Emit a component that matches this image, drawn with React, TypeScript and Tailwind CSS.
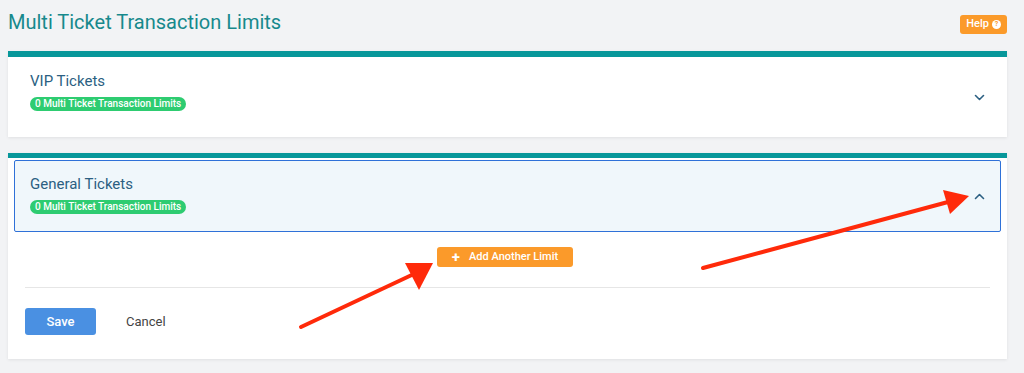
import React from 'react';

function Chevron({ up }: { up?: boolean }) {
  return (
    <svg width="11" height="7" viewBox="0 0 11 7" className="text-[#2b5f82]">
      <path
        d={up ? 'M1.5 5.5 L5.5 1.5 L9.5 5.5' : 'M1.5 1.5 L5.5 5.5 L9.5 1.5'}
        fill="none"
        stroke="currentColor"
        strokeWidth="1.6"
        strokeLinecap="round"
        strokeLinejoin="round"
      />
    </svg>
  );
}

function Badge() {
  return (
    <span className="inline-flex h-[14px] items-center rounded-full bg-[#2ecc71] px-[5px] text-[10px] font-medium leading-none text-white">
      0 Multi Ticket Transaction Limits
    </span>
  );
}

function Arrows() {
  return (
    <svg className="pointer-events-none absolute left-0 top-0" width="1024" height="373">
      <g fill="#ff2a0a" stroke="#ff2a0a">
        <line x1="301" y1="327" x2="416" y2="273" strokeWidth="4" strokeLinecap="round" />
        <polygon points="433,263 405,263 419,290" stroke="none" />
        <line x1="703" y1="268" x2="948" y2="202" strokeWidth="4" strokeLinecap="round" />
        <polygon points="969,196 943,190 950,214" stroke="none" />
      </g>
    </svg>
  );
}

export default function App() {
  return (
    <div className="relative h-[373px] w-[1024px] overflow-hidden bg-[#f2f3f5] px-2 font-['Roboto',sans-serif]">
      <div className="flex h-[51px] w-[999px] items-start justify-between">
        <h1 className="mt-[10px] text-[20px] leading-[24px] text-[#17898c]">Multi Ticket Transaction Limits</h1>
        <button className="mt-[15px] flex h-[19px] items-center gap-[3px] rounded-[3px] bg-[#fb9a2a] px-[6px] text-[11px] font-medium text-white">
          Help
          <span className="flex h-[9px] w-[9px] items-center justify-center rounded-full bg-white text-[7px] font-bold leading-none text-[#fb9a2a]">
            ?
          </span>
        </button>
      </div>

      <div className="w-[999px] border-t-[6px] border-[#07979a] bg-white shadow-[0_1px_3px_rgba(0,0,0,0.08)]">
        <div className="flex h-[80px] items-center justify-between pl-[22px] pr-[22px]">
          <div className="mb-[11px] flex flex-col gap-[7px]">
            <div className="text-[15px] leading-[18px] text-[#2b5f82]">VIP Tickets</div>
            <div className="flex">
              <Badge />
            </div>
          </div>
          <Chevron />
        </div>
      </div>

      <div className="mt-4 w-[999px] border-t-[5px] border-[#07979a] bg-white px-[6px] pb-[24px] pt-[2px] shadow-[0_1px_3px_rgba(0,0,0,0.08)]">
        <div className="flex h-[72px] items-center justify-between rounded-[2px] border border-[#2f71d8] bg-[#f0f7fb] pl-[15px] pr-[15px]">
          <div className="mb-[3px] flex flex-col gap-[7px]">
            <div className="text-[15px] leading-[18px] text-[#2b5f82]">General Tickets</div>
            <div className="flex">
              <Badge />
            </div>
          </div>
          <Chevron up />
        </div>

        <div className="flex justify-center pr-[5px] pt-[15px]">
          <button className="flex h-[20px] w-[136px] items-center justify-center gap-[9px] rounded-[3px] bg-[#fb9a2a] text-[11px] font-medium text-white">
            <span className="text-[15px] font-bold leading-none">+</span>
            Add Another Limit
          </button>
        </div>

        <div className="mx-[11px] mt-[20px] border-t border-[#e6e6e6]" />

        <div className="mt-[20px] flex items-center gap-[30px] pl-[11px]">
          <button className="h-[27px] w-[71px] rounded-[3px] bg-[#4a90e2] text-[13px] font-medium text-white">Save</button>
          <span className="text-[13px] text-[#444]">Cancel</span>
        </div>
      </div>

      <Arrows />
    </div>
  );
}
